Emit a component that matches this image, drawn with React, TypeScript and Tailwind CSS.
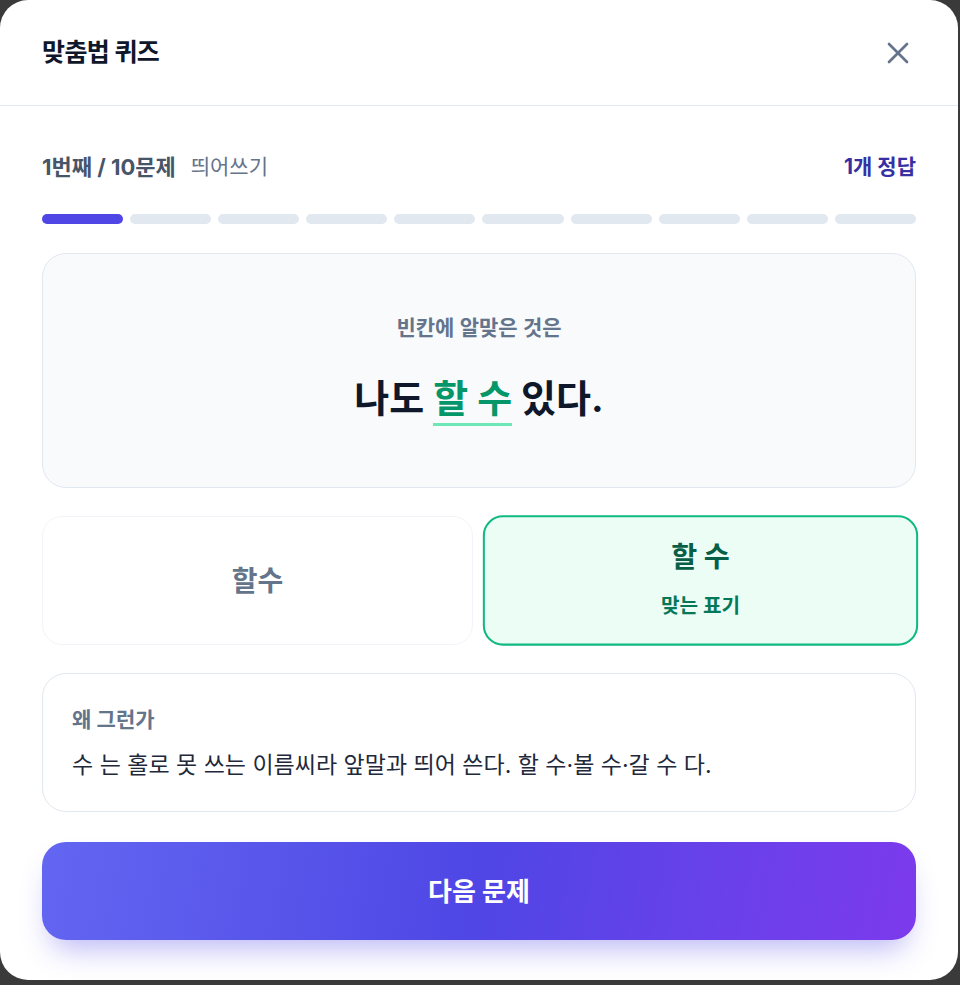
import { X } from "lucide-react";

const SEGMENTS = 10;
const CURRENT = 1;

export default function App() {
  return (
    <div className="min-h-[985px] w-full bg-[#3a3a3a] font-[Inter,'Noto_Sans_CJK_KR',sans-serif]">
      <div className="flex h-[980px] w-[958px] flex-col rounded-[28px] bg-white">
        {/* Header */}
        <div className="flex h-[106px] shrink-0 items-center justify-between border-b border-[#e2e8f0] px-[42px]">
          <h1 className="text-[25px] font-bold tracking-tight text-[#0f172a]">맞춤법 퀴즈</h1>
          <button className="text-[#64748b]">
            <X size={36} strokeWidth={1.8} />
          </button>
        </div>

        <div className="flex flex-col px-[42px] pb-[40px]">
          {/* Progress row */}
          <div className="mt-[47px] flex h-7 items-center justify-between text-[21px]">
            <div className="flex items-center gap-[15px]">
              <span className="text-[22px] font-bold text-[#475569]">1번째 / 10문제</span>
              <span className="text-[#64748b]">띄어쓰기</span>
            </div>
            <span className="font-bold text-[#3730a3]">1개 정답</span>
          </div>

          <div className="mt-[33px] flex gap-[7px]">
            {Array.from({ length: SEGMENTS }).map((_, i) => (
              <div
                key={i}
                className={`h-2.5 flex-1 rounded-full ${i < CURRENT ? "bg-[#4f46e5]" : "bg-[#e2e8f0]"}`}
              />
            ))}
          </div>

          {/* Question */}
          <div className="mt-[29px] flex h-[235px] flex-col items-center rounded-[24px] border border-[#e2e8f0] bg-[#f8fafc] pt-[62px]">
            <p className="text-[21px] leading-6 font-semibold text-[#64748b]">빈칸에 알맞은 것은</p>
            <p className="mt-[37px] text-[38px] leading-[43px] font-bold text-[#0f172a]">
              나도{" "}
              <span className="inline-block border-b-[3px] border-[#6ee7b7] pb-[3px] text-[#059669]">할 수</span>{" "}
              있다.
            </p>
          </div>

          {/* Options */}
          <div className="mt-[28px] grid grid-cols-2 gap-3">
            <button className="flex h-[129px] items-center justify-center rounded-[20px] border border-[#f1f5f9] bg-white">
              <span className="text-[28px] font-bold text-[#64748b]">할수</span>
            </button>
            <button className="flex h-[129px] scale-[1.01] flex-col items-center justify-center rounded-[20px] border-2 border-[#10b981] bg-[#ecfdf5]">
              <span className="text-[28px] leading-8 font-bold text-[#065f46]">할 수</span>
              <span className="mt-[19px] text-[20px] leading-7 font-bold text-[#047857]">맞는 표기</span>
            </button>
          </div>

          {/* Explanation */}
          <div className="mt-[28px] flex h-[139px] flex-col rounded-[24px] border border-[#e2e8f0] bg-white px-[29px] pt-[34px]">
            <p className="text-[21px] leading-6 font-semibold text-[#64748b]">왜 그런가</p>
            <p className="mt-[19px] text-[23px] leading-7 text-[#1e293b]">
              수 는 홀로 못 쓰는 이름씨라 앞말과 띄어 쓴다. 할 수·볼 수·갈 수 다.
            </p>
          </div>

          {/* Next */}
          <button className="mt-[30px] flex h-[98px] items-center justify-center rounded-[24px] bg-linear-100 from-[#6366f1] via-[#4f46e5] to-[#7c3aed] shadow-[0_18px_30px_-10px_rgba(79,70,229,0.4)]">
            <span className="text-[26px] font-bold text-white">다음 문제</span>
          </button>
        </div>
      </div>
    </div>
  );
}
